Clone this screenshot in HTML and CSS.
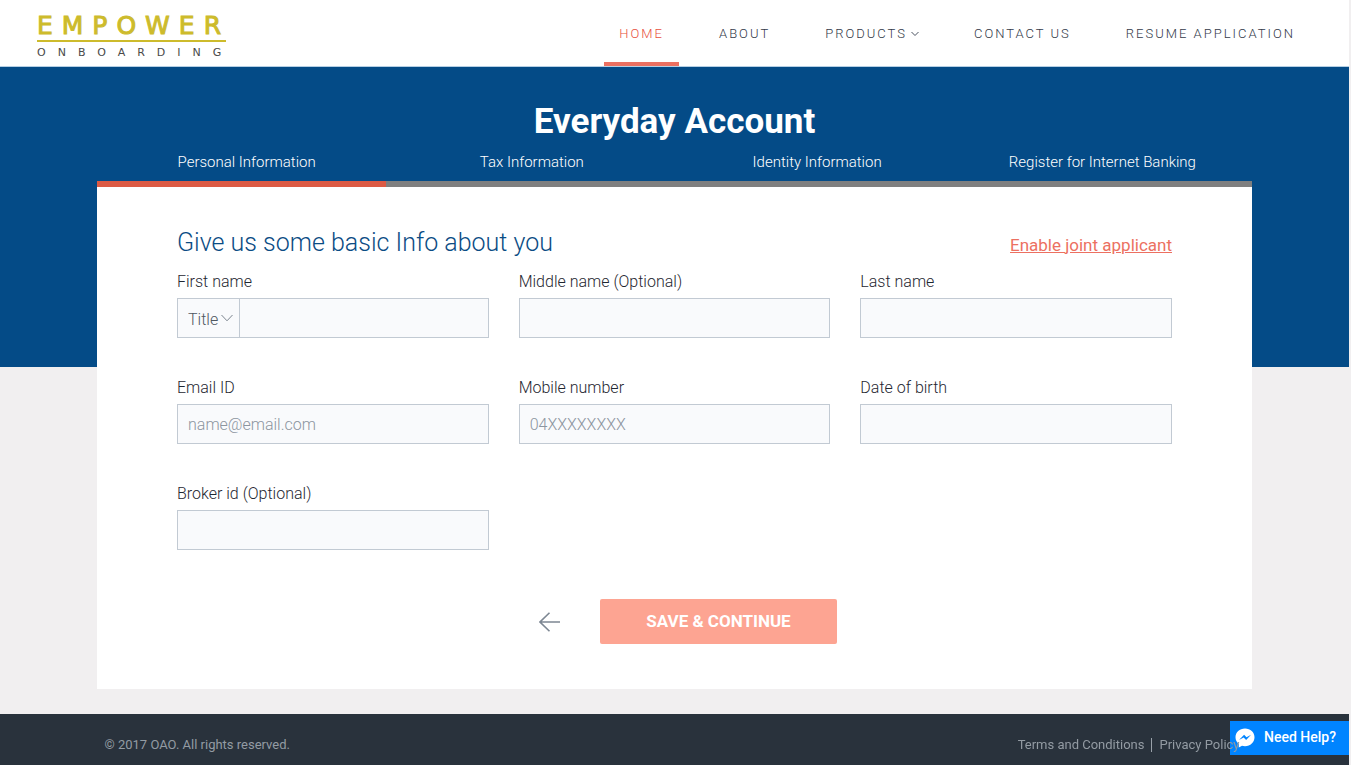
FILE: index.html
```html
<!DOCTYPE html>
<html lang="en">
<head>
<meta charset="utf-8">
<meta name="viewport" content="width=device-width, initial-scale=1">
<title>Everyday Account</title>
<link rel="stylesheet" href="styles.css">
</head>
<body>
<header class="site-header">
  <a class="logo" href="#">
    <span class="logo-name">EMPOWER</span>
    <span class="logo-tag">ONBOARDING</span>
  </a>
  <nav class="nav">
    <a class="nav-link active" href="#">HOME</a>
    <a class="nav-link" href="#">ABOUT</a>
    <a class="nav-link" href="#">PRODUCTS<svg class="nav-caret" viewBox="0 0 8 6" aria-hidden="true"><path d="M0.5 1 4 4.5 7.5 1"/></svg></a>
    <a class="nav-link" href="#">CONTACT US</a>
    <a class="nav-link" href="#">RESUME APPLICATION</a>
  </nav>
</header>

<main class="main">
  <div class="container">
    <h1 class="title">Everyday Account</h1>
    <ol class="steps">
      <li>Personal Information</li>
      <li>Tax Information</li>
      <li>Identity Information</li>
      <li>Register for Internet Banking</li>
    </ol>
    <div class="progress"><div class="progress-done"></div></div>
    <form class="card">
      <div class="card-head">
        <h2 class="card-title">Give us some basic Info about you</h2>
        <a class="joint-link" href="#">Enable joint applicant</a>
      </div>
      <div class="fields">
        <div class="field">
          <label for="first">First name</label>
          <div class="name-group">
            <div class="select-wrap">
              <select class="title-select" aria-label="Title"><option>Title</option><option>Mr</option><option>Mrs</option><option>Ms</option></select>
              <svg class="select-caret" viewBox="0 0 12 8" aria-hidden="true"><path d="M0.5 1 6 6.8 11.5 1"/></svg>
            </div>
            <input class="input" id="first" type="text">
          </div>
        </div>
        <div class="field"><label for="middle">Middle name (Optional)</label><input class="input" id="middle" type="text"></div>
        <div class="field"><label for="last">Last name</label><input class="input" id="last" type="text"></div>
        <div class="field"><label for="email">Email ID</label><input class="input" id="email" type="email" placeholder="name@email.com"></div>
        <div class="field"><label for="mobile">Mobile number</label><input class="input" id="mobile" type="tel" placeholder="04XXXXXXXX"></div>
        <div class="field"><label for="dob">Date of birth</label><input class="input" id="dob" type="text"></div>
        <div class="field"><label for="broker">Broker id (Optional)</label><input class="input" id="broker" type="text"></div>
      </div>
      <div class="actions">
        <button class="back" type="button" aria-label="Back">
          <svg viewBox="0 0 21 20" aria-hidden="true"><path d="M10.5 0.7 1 10l9.5 9.3M1 10h20"/></svg>
        </button>
        <button class="save" type="submit">SAVE &amp; CONTINUE</button>
      </div>
    </form>
  </div>
</main>

<footer class="footer">
  <div class="footer-inner">
    <span>© 2017 OAO. All rights reserved.</span>
    <div class="footer-links">
      <a href="#">Terms and Conditions</a><span class="bar"></span><a href="#">Privacy Policy</a>
    </div>
  </div>
</footer>

<button class="chat" type="button">
  <svg class="chat-icon" viewBox="0 0 20 20" aria-hidden="true">
    <path fill="#fff" d="M10 0.5C4.6 0.5 0.5 4.4 0.5 9.3c0 2.700 1.300 5.100 3.300 6.700V19.600l3.200-1.800c.9.300 1.900.400 3 .400 5.400 0 9.500-3.900 9.500-8.900S15.400 0.500 10 0.500z"/>
    <path fill="#0084ff" d="M9.100 6.700 4 12.100l4.700-2.600 2.400 2.600L16.100 6.700l-4.600 2.600z"/>
  </svg>
  Need Help?
</button>
</body>
</html>
```
FILE: styles.css
```css
* { box-sizing: border-box; }

body {
  margin: 0;
  min-height: 100vh;
  display: flex;
  flex-direction: column;
  border-right: 2px solid #f1eff0;
  background: #f1eff0;
  color: #1f2731;
  font: 300 16px/24px Roboto, "Liberation Sans", sans-serif;
}

a { color: inherit; text-decoration: none; }
button, input, select { font: inherit; }

.site-header {
  display: flex;
  justify-content: space-between;
  background: #fff;
  border-bottom: 1px solid #b5cfe4;
  padding: 0 39px 0 37px;
}

.logo {
  display: flex;
  flex-direction: column;
  padding-top: 14px;
  font-family: "DejaVu Sans", sans-serif;
  font-weight: 400;
}
.logo-name {
  border-bottom: 2px solid #cdbb2c;
  color: #cdbb2c;
  font-size: 25px;
  line-height: 24px;
  letter-spacing: 9px;
  -webkit-text-stroke: 1px #cdbb2c;
  margin-bottom: 5px;
  padding-bottom: 2px;
  width: 189px;
  white-space: nowrap;
}
.logo-tag {
  color: #4a4a4a;
  font-size: 11px;
  line-height: 12px;
  letter-spacing: 12px;
  width: 189px;
  white-space: nowrap;
}

.nav { display: flex; gap: 25px; }
.nav-link {
  height: 66px;
  padding: 0 15px;
  border-bottom: 4px solid transparent;
  color: #333a49;
  font-size: 13px;
  font-weight: 300;
  line-height: 67px;
  letter-spacing: 2px;
  white-space: nowrap;
}
.nav-link.active { color: #e8503e; border-color: #ec7061; }
.nav-caret { width: 8px; height: 6px; margin-left: 4px; vertical-align: 1px; fill: none; stroke: #4b5261; }

.main {
  padding: 37px 20px 25px;
  background: linear-gradient(#044b87, #044b87) top / 100% 300px no-repeat;
}
.container { max-width: 1155px; margin: 0 auto; }

.title {
  margin: 0;
  color: #fff;
  font-size: 35px;
  font-weight: 700;
  line-height: 36px;
  text-align: center;
}
.steps {
  display: grid;
  grid-template-columns: repeat(4, 1fr);
  margin: 0;
  padding: 10px 7px 7px;
  list-style: none;
  color: #fff;
  font-size: 15px;
  text-align: center;
}
.progress { height: 6px; background: #7f7f7f; }
.progress-done { width: 25%; height: 100%; background: #dc5a44; }

.card { padding: 41px 80px 45px; background: #fff; }
.card-head { display: flex; justify-content: space-between; align-items: center; margin-bottom: 12px; }
.card-title {
  margin: 0;
  color: #0b4c84;
  font-size: 25px;
  font-weight: 300;
  line-height: 30px;
}
.joint-link {
  color: #ec7061;
  font-size: 17px;
  font-weight: 400;
  text-decoration: underline;
  padding-top: 3px;
}

.fields { display: grid; grid-template-columns: repeat(3, 1fr); gap: 38px 30px; }
.field { display: flex; flex-direction: column; gap: 4px; }
.input, .title-select {
  width: 100%;
  height: 40px;
  padding: 0 10px;
  border: 1px solid #c2cad3;
  border-radius: 0;
  background: #f9fafc;
  color: #4f5761;
}
.input::placeholder { color: #8c959f; opacity: 1; }
.name-group { display: grid; grid-template-columns: 62px 1fr; }
.select-wrap { position: relative; }
.title-select { appearance: none; border-right: 0; padding-top: 3px; }
.select-caret {
  position: absolute;
  right: 6px;
  top: 16px;
  width: 12px;
  height: 8px;
  fill: none;
  stroke: #7c858f;
  pointer-events: none;
}

.actions { display: flex; justify-content: center; gap: 40px; margin-top: 49px; }
.back { padding: 0 0 0 27px; border: 0; background: none; }
.back svg { display: block; width: 21px; height: 20px; fill: none; stroke: #7d8793; stroke-width: 1.6; }
.save {
  width: 237px;
  height: 45px;
  padding: 0 0 2px;
  border: 0;
  border-radius: 2px;
  background: #fda492;
  color: #fff;
  font-size: 17px;
  font-weight: 700;
}

.footer { flex: 1; padding: 19px 20px 8px; background: #29323c; color: #939ba3; font-size: 13px; font-weight: 400; }
.footer-inner { display: flex; justify-content: space-between; max-width: 1140px; margin: 0 auto; }
.footer-links { position: relative; z-index: 2; display: flex; align-items: center; padding-right: 5px; }
.bar { width: 1px; height: 14px; margin: 0 7px; background: #99a1a9; }

.chat {
  position: fixed;
  right: 2px;
  bottom: 10px;
  z-index: 1;
  display: flex;
  align-items: center;
  gap: 9px;
  height: 34px;
  padding: 0 13px 2px 5px;
  border: 0;
  background: #0084ff;
  color: #fff;
  font-size: 14px;
  font-weight: 500;
}
.chat-icon { width: 20px; height: 20px; margin-top: 2px; }
```
